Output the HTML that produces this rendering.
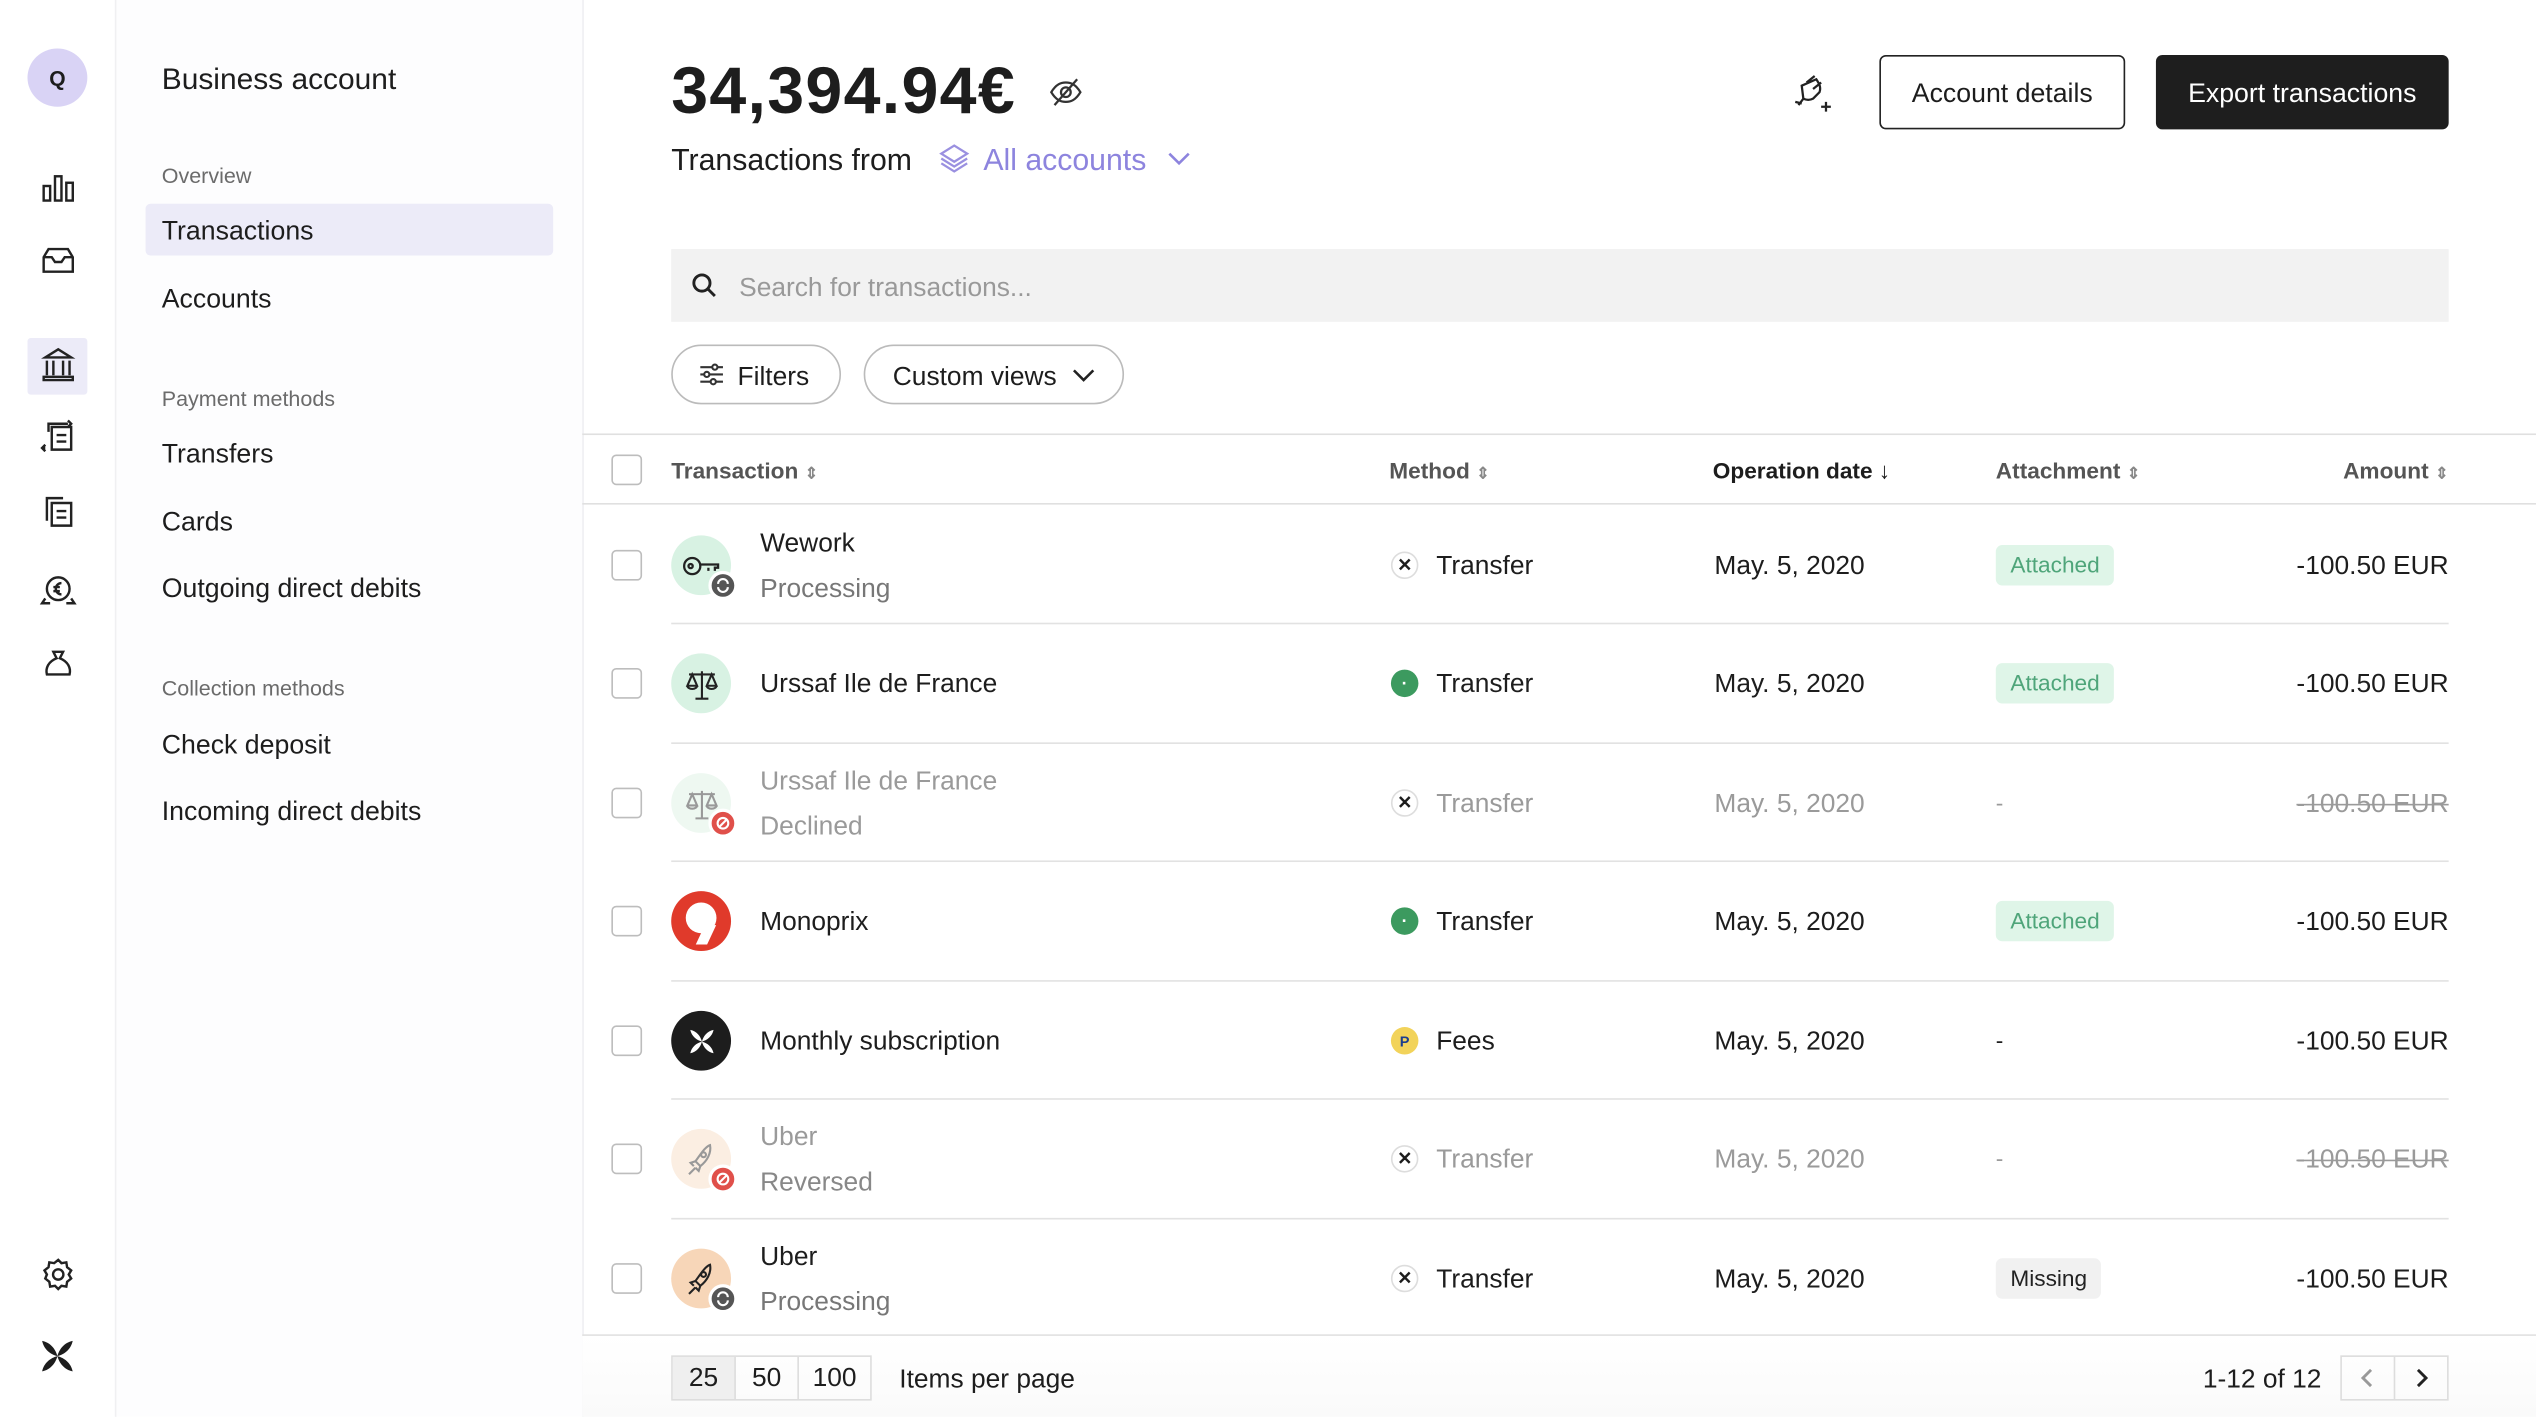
<!DOCTYPE html>
<html><head><meta charset="utf-8">
<style>
*{box-sizing:border-box;margin:0;padding:0}
html,body{width:2536px;height:1416px;overflow:hidden;background:#fff}
#w{position:absolute;left:0;top:0;width:1568px;height:876px;transform:scale(1.61735);transform-origin:0 0;font-family:"Liberation Sans",Arial,sans-serif;color:#1d1d1d}
.a{position:absolute}
.nav{font-size:16.5px;color:#1d1d1d}
.sec{font-size:13.3px;color:#6b6b6b}
.cb{position:absolute;left:378px;width:19px;height:19px;border:1.3px solid #bdbdbd;border-radius:3px;background:#fff}
.row{position:absolute;left:360px;width:1208px;height:73px}
.sep{position:absolute;left:415px;width:1099px;height:1px;background:#e2e2e2}
.av{position:absolute;left:55px;top:18px;width:37px;height:37px;border-radius:50%;display:flex;align-items:center;justify-content:center}
.badge{position:absolute;left:78px;width:18px;height:18px;border-radius:50%;border:2px solid #fff;display:flex;align-items:center;justify-content:center}
.t1{position:absolute;left:110px;font-size:16.3px}
.m{position:absolute;left:500px;top:28px;width:17px;height:17px;border-radius:50%;display:flex;align-items:center;justify-content:center;font-size:11px;font-weight:bold}
.mt{position:absolute;left:528px;top:28px;font-size:16.3px}
.dt{position:absolute;left:700px;top:28px;font-size:16.3px}
.att{position:absolute;left:874px;top:24px;height:25px;padding:0 9px;border-radius:4px;font-size:14px;line-height:25px}
.amt{position:absolute;right:54px;top:28px;font-size:16.3px}
.dim{color:#9a9a9a}
.th{position:absolute;top:283px;font-size:14px;font-weight:bold;color:#555}
.sort{font-size:10px;color:#888;margin-left:4px}
</style></head><body><div id="w">

<div class="a" style="left:0;top:0;width:72px;height:876px;background:#fff;border-right:1px solid #f0f0f2"></div>
<div class="a" style="left:17px;top:30px;width:37px;height:36px;border-radius:50%;background:#d9d3f5;font-size:13px;font-weight:bold;display:flex;align-items:center;justify-content:center">Q</div>
<div class="a" style="left:17px;top:209px;width:37px;height:35px;background:#ecebf8;border-radius:2px"></div>
<svg class="a" style="left:24px;top:106px" width="24" height="340" viewBox="0 0 24 340" fill="none" stroke="#222" stroke-width="1.5">
 <rect x="3" y="9" width="4" height="9"/><rect x="10" y="3" width="4" height="15"/><rect x="17" y="7" width="4" height="11"/>
 <path d="M3 53v9h18v-9l-3-5H6z M3 53h5l2 3h4l2-3h5"/>
 <path d="M4 115h16l-8-5z M5 117v9 M9 117v9 M15 117v9 M19 117v9 M3 127h18v2H3z"/>
 <path d="M8 158h12v14H8z M11 163h6 M11 167h6 M6 161v-5h12 M18 154l2 2-2 2 M4 171h-2 M4 169l-2 2 2 2"/>
 <path d="M8 205h12v14H8z M11 210h6 M11 214h6 M5 216v-14h10"/>
 <circle cx="12" cy="258" r="7"/><path d="M14 254.5a3.5 3.5 0 1 0 0 7 M9 257h4 M9 259.5h4 M4 264l-2 3h5 M20 264l2 3h-5"/>
 <path d="M9 297h6l-2 4c5 2 7 6 6 10H5c-1-4 1-8 6-10z"/>
</svg>
<svg class="a" style="left:24px;top:776px" width="24" height="24" viewBox="0 0 24 24" fill="none" stroke="#222" stroke-width="1.5"><path d="M12 3l2 2 3-.5.5 3 2.5 2-1.5 2.5 1.5 2.5-2.5 2-.5 3-3-.5-2 2-2-2-3 .5-.5-3-2.5-2L5 12 3.5 9.5 6 7.5l.5-3 3 .5z"/><circle cx="12" cy="12" r="3.2"/></svg>
<svg class="a" style="left:25px;top:828px" width="21" height="21" viewBox="0 0 20 20" fill="#1d1d1d"><path d="M1 1c5 1 8 5 9 9-4-1-8-4-9-9zM19 1c-1 5-5 8-9 9 1-4 4-8 9-9zM1 19c1-5 5-8 9-9-1 4-4 8-9 9zM19 19c-5-1-8-5-9-9 4 1 8 4 9 9z"/></svg>

<div class="a" style="left:72px;top:0;width:289px;height:876px;background:#fdfdfe;border-right:1px solid #efeff2"></div>
<div class="a" style="left:100px;top:38px;font-size:18.5px">Business account</div>
<div class="a sec" style="left:100px;top:101px">Overview</div>
<div class="a" style="left:90px;top:126px;width:252px;height:32px;background:#ecebf8;border-radius:3px"></div>
<div class="a nav" style="left:100px;top:134px">Transactions</div>
<div class="a nav" style="left:100px;top:176px">Accounts</div>
<div class="a sec" style="left:100px;top:239px">Payment methods</div>
<div class="a nav" style="left:100px;top:272px">Transfers</div>
<div class="a nav" style="left:100px;top:314px">Cards</div>
<div class="a nav" style="left:100px;top:355px">Outgoing direct debits</div>
<div class="a sec" style="left:100px;top:418px">Collection methods</div>
<div class="a nav" style="left:100px;top:452px">Check deposit</div>
<div class="a nav" style="left:100px;top:493px">Incoming direct debits</div>

<div class="a" style="left:415px;top:33px;font-size:41px;font-weight:bold;letter-spacing:0.8px">34,394.94€</div>
<svg class="a" style="left:648px;top:47px" width="22" height="20" viewBox="0 0 22 20" fill="none" stroke="#333" stroke-width="1.4"><path d="M2 10c3-5 6-6 9-6s6 1 9 6c-3 5-6 6-9 6s-6-1-9-6z"/><circle cx="11" cy="10" r="3"/><path d="M4 18L18 2"/></svg>
<div class="a" style="left:415px;top:88px;font-size:18.7px">Transactions from</div>
<svg class="a" style="left:580px;top:88px" width="20" height="20" viewBox="0 0 20 20" fill="none" stroke="#9a90e0" stroke-width="1.4"><path d="M10 2l8 5-8 5-8-5z M2 10l8 5 8-5 M2 13l8 5 8-5"/></svg>
<div class="a" style="left:608px;top:88px;font-size:18.7px;color:#8d84de">All accounts</div>
<svg class="a" style="left:721px;top:92px" width="16" height="12" viewBox="0 0 16 12" fill="none" stroke="#8d84de" stroke-width="1.6"><path d="M2 3l6 6 6-6"/></svg>

<svg class="a" style="left:1108px;top:43px" width="28" height="28" viewBox="0 0 28 28" fill="none" stroke="#222" stroke-width="1.4"><path d="M9 8l5-4 M13 12l5-4 M6 10l9-4c2 3 3 5 2 8l-4 4c-2 1-4 1-6 0z M7 18l-3 4 M2 20l4 1 M21 20v6 M18 23h6"/></svg>
<div class="a" style="left:1162px;top:34px;width:152px;height:46px;border:1.3px solid #222;border-radius:4px;font-size:16.5px;display:flex;align-items:center;justify-content:center;padding-top:2px">Account details</div>
<div class="a" style="left:1333px;top:34px;width:181px;height:46px;background:#1e1e1e;color:#fff;border-radius:4px;font-size:16.5px;display:flex;align-items:center;justify-content:center;padding-top:2px">Export transactions</div>

<div class="a" style="left:415px;top:154px;width:1099px;height:45px;background:#f2f2f2"></div>
<svg class="a" style="left:427px;top:168px" width="17" height="17" viewBox="0 0 17 17" fill="none" stroke="#222" stroke-width="1.8"><circle cx="7" cy="7" r="5"/><path d="M11 11l4 4"/></svg>
<div class="a" style="left:457px;top:169px;font-size:16.3px;color:#999">Search for transactions...</div>

<div class="a" style="left:415px;top:213px;width:105px;height:37px;border:1px solid #bbb;border-radius:19px"></div>
<svg class="a" style="left:432px;top:224px" width="16" height="15" viewBox="0 0 16 15" fill="none" stroke="#333" stroke-width="1.3"><path d="M1 3h14 M1 7.5h14 M1 12h14"/><circle cx="10" cy="3" r="1.6" fill="#fff"/><circle cx="5" cy="7.5" r="1.6" fill="#fff"/><circle cx="9" cy="12" r="1.6" fill="#fff"/></svg>
<div class="a" style="left:456px;top:224px;font-size:16.3px">Filters</div>
<div class="a" style="left:534px;top:213px;width:161px;height:37px;border:1px solid #bbb;border-radius:19px"></div>
<div class="a" style="left:552px;top:224px;font-size:16.3px">Custom views</div>
<svg class="a" style="left:662px;top:226px" width="16" height="12" viewBox="0 0 16 12" fill="none" stroke="#222" stroke-width="1.6"><path d="M2 3l6 6 6-6"/></svg>

<div class="a" style="left:360px;top:268px;width:1208px;height:1px;background:#e0e0e0"></div>
<div class="a" style="left:360px;top:311px;width:1208px;height:1px;background:#e0e0e0"></div>
<div class="cb" style="top:281px"></div>
<div class="th" style="left:415px">Transaction<span class="sort">⇕</span></div>
<div class="th" style="left:859px">Method<span class="sort">⇕</span></div>
<div class="th" style="left:1059px;color:#1d1d1d">Operation date ↓</div>
<div class="th" style="left:1234px">Attachment<span class="sort">⇕</span></div>
<div class="th" style="right:54px">Amount<span class="sort">⇕</span></div>

<div class="sep" style="top:385px"></div><div class="sep" style="top:459px"></div><div class="sep" style="top:532px"></div>
<div class="sep" style="top:606px"></div><div class="sep" style="top:679px"></div><div class="sep" style="top:753px"></div>
<div class="a" style="left:360px;top:825px;width:1208px;height:1px;background:#e0e0e0"></div>

<div class="cb" style="top:340px"></div><div class="cb" style="top:413px"></div><div class="cb" style="top:487px"></div>
<div class="cb" style="top:560px"></div><div class="cb" style="top:634px"></div><div class="cb" style="top:707px"></div><div class="cb" style="top:781px"></div>

<div class="row" style="top:313px">
 <div class="av" style="background:#d8f2e3"><svg width="24" height="14" viewBox="0 0 24 14" fill="none" stroke="#222" stroke-width="1.4"><circle cx="6" cy="7" r="5"/><circle cx="5" cy="7" r="1.3"/><path d="M11 6h11v2h-2v2 M16 8v2"/></svg></div>
 <div class="badge" style="top:40px;background:#555"><svg width="10" height="10" viewBox="0 0 10 10" fill="none" stroke="#fff" stroke-width="1.3"><path d="M8 4a3 3 0 0 0-6 0 M2 6a3 3 0 0 0 6 0"/></svg></div>
 <div class="t1" style="top:14px">Wework</div><div class="t1 dim" style="top:42px;color:#777">Processing</div>
 <div class="m" style="border:1px solid #ddd">✕</div><div class="mt">Transfer</div>
 <div class="dt">May. 5, 2020</div><div class="att" style="background:#dff5e8;color:#4fa57a">Attached</div><div class="amt">-100.50 EUR</div>
</div>
<div class="row" style="top:386px">
 <div class="av" style="background:#d8f2e3"><svg width="22" height="22" viewBox="0 0 22 22" fill="none" stroke="#222" stroke-width="1.3"><path d="M11 3v17 M7 20h8 M3 5h16 M5 5l-3 7h6z M17 5l-3 7h6z M2 12a3 2 0 0 0 6 0 M14 12a3 2 0 0 0 6 0"/></svg></div>
 <div class="t1" style="top:28px">Urssaf Ile de France</div>
 <div class="m" style="background:#3c9a5f;color:#fff">·</div><div class="mt">Transfer</div>
 <div class="dt">May. 5, 2020</div><div class="att" style="background:#dff5e8;color:#4fa57a">Attached</div><div class="amt">-100.50 EUR</div>
</div>
<div class="row" style="top:460px">
 <div class="av" style="background:#eef8f1"><svg width="22" height="22" viewBox="0 0 22 22" fill="none" stroke="#999" stroke-width="1.3"><path d="M11 3v17 M7 20h8 M3 5h16 M5 5l-3 7h6z M17 5l-3 7h6z M2 12a3 2 0 0 0 6 0 M14 12a3 2 0 0 0 6 0"/></svg></div>
 <div class="badge" style="top:40px;background:#e0504a"><svg width="10" height="10" viewBox="0 0 10 10" fill="none" stroke="#fff" stroke-width="1.3"><circle cx="5" cy="5" r="3.3"/><path d="M3 7l4-4"/></svg></div>
 <div class="t1 dim" style="top:14px">Urssaf Ile de France</div><div class="t1 dim" style="top:42px">Declined</div>
 <div class="m" style="border:1px solid #ddd">✕</div><div class="mt dim">Transfer</div>
 <div class="dt dim">May. 5, 2020</div><div class="att dim" style="padding:0">-</div><div class="amt dim" style="text-decoration:line-through">-100.50 EUR</div>
</div>
<div class="row" style="top:533px">
 <div class="av" style="background:#e03a2b"><div style="width:19px;height:19px;border-radius:50%;background:#fff;margin-top:-4px"></div><div style="position:absolute;left:18px;top:21px;width:7px;height:12px;background:#fff;transform:skewX(-25deg)"></div></div>
 <div class="t1" style="top:28px">Monoprix</div>
 <div class="m" style="background:#3c9a5f;color:#fff">·</div><div class="mt">Transfer</div>
 <div class="dt">May. 5, 2020</div><div class="att" style="background:#dff5e8;color:#4fa57a">Attached</div><div class="amt">-100.50 EUR</div>
</div>
<div class="row" style="top:607px">
 <div class="av" style="background:#1d1d1d"><svg width="16" height="16" viewBox="0 0 20 20" fill="#fff"><path d="M1 1c5 1 8 5 9 9-4-1-8-4-9-9zM19 1c-1 5-5 8-9 9 1-4 4-8 9-9zM1 19c1-5 5-8 9-9-1 4-4 8-9 9zM19 19c-5-1-8-5-9-9 4 1 8 4 9 9z"/></svg></div>
 <div class="t1" style="top:28px">Monthly subscription</div>
 <div class="m" style="background:#f2d35a;color:#1a3d8f;font-size:9px">P</div><div class="mt">Fees</div>
 <div class="dt">May. 5, 2020</div><div class="att" style="padding:0">-</div><div class="amt">-100.50 EUR</div>
</div>
<div class="row" style="top:680px">
 <div class="av" style="background:#fbeee2"><svg width="20" height="22" viewBox="0 0 20 22" fill="none" stroke="#999" stroke-width="1.3"><path d="M15 2c1 5-2 10-6 13l-3-3c3-4 6-9 9-10z"/><circle cx="11" cy="8" r="1.5"/><path d="M6 12l-3 1 2 2 M9 15l-1 3-2-2 M2 20l4-4"/></svg></div>
 <div class="badge" style="top:40px;background:#e0504a"><svg width="10" height="10" viewBox="0 0 10 10" fill="none" stroke="#fff" stroke-width="1.3"><circle cx="5" cy="5" r="3.3"/><path d="M3 7l4-4"/></svg></div>
 <div class="t1 dim" style="top:14px">Uber</div><div class="t1 dim" style="top:42px;color:#888">Reversed</div>
 <div class="m" style="border:1px solid #ddd">✕</div><div class="mt dim">Transfer</div>
 <div class="dt dim">May. 5, 2020</div><div class="att dim" style="padding:0">-</div><div class="amt dim" style="text-decoration:line-through">-100.50 EUR</div>
</div>
<div class="row" style="top:754px">
 <div class="av" style="background:#f7d6b8"><svg width="20" height="22" viewBox="0 0 20 22" fill="none" stroke="#222" stroke-width="1.3"><path d="M15 2c1 5-2 10-6 13l-3-3c3-4 6-9 9-10z"/><circle cx="11" cy="8" r="1.5"/><path d="M6 12l-3 1 2 2 M9 15l-1 3-2-2 M2 20l4-4"/></svg></div>
 <div class="badge" style="top:40px;background:#555"><svg width="10" height="10" viewBox="0 0 10 10" fill="none" stroke="#fff" stroke-width="1.3"><path d="M8 4a3 3 0 0 0-6 0 M2 6a3 3 0 0 0 6 0"/></svg></div>
 <div class="t1" style="top:14px">Uber</div><div class="t1" style="top:42px;color:#777">Processing</div>
 <div class="m" style="border:1px solid #ddd">✕</div><div class="mt">Transfer</div>
 <div class="dt">May. 5, 2020</div><div class="att" style="background:#f1f1f1;color:#222">Missing</div><div class="amt">-100.50 EUR</div>
</div>

<div class="a" style="left:360px;top:826px;width:1208px;height:50px;background:linear-gradient(#fff,#fafafa)"></div>
<div class="a" style="left:415px;top:838px;width:124px;height:28px;border:1px solid #ddd;display:flex;font-size:16.3px">
 <div style="width:39px;background:#efefef;border-right:1px solid #ddd;display:flex;align-items:center;justify-content:center">25</div>
 <div style="width:39px;border-right:1px solid #ddd;display:flex;align-items:center;justify-content:center">50</div>
 <div style="flex:1;display:flex;align-items:center;justify-content:center">100</div>
</div>
<div class="a" style="left:556px;top:844px;font-size:16.3px">Items per page</div>
<div class="a" style="left:1362px;top:844px;font-size:16.3px">1-12 of 12</div>
<div class="a" style="left:1447px;top:838px;width:67px;height:28px;border:1px solid #ddd;display:flex">
 <div style="width:33px;border-right:1px solid #ddd;display:flex;align-items:center;justify-content:center"><svg width="10" height="14" viewBox="0 0 10 14" fill="none" stroke="#999" stroke-width="1.8"><path d="M7 2L2 7l5 5"/></svg></div>
 <div style="flex:1;display:flex;align-items:center;justify-content:center"><svg width="10" height="14" viewBox="0 0 10 14" fill="none" stroke="#222" stroke-width="1.8"><path d="M3 2l5 5-5 5"/></svg></div>
</div>
</div></body></html>
